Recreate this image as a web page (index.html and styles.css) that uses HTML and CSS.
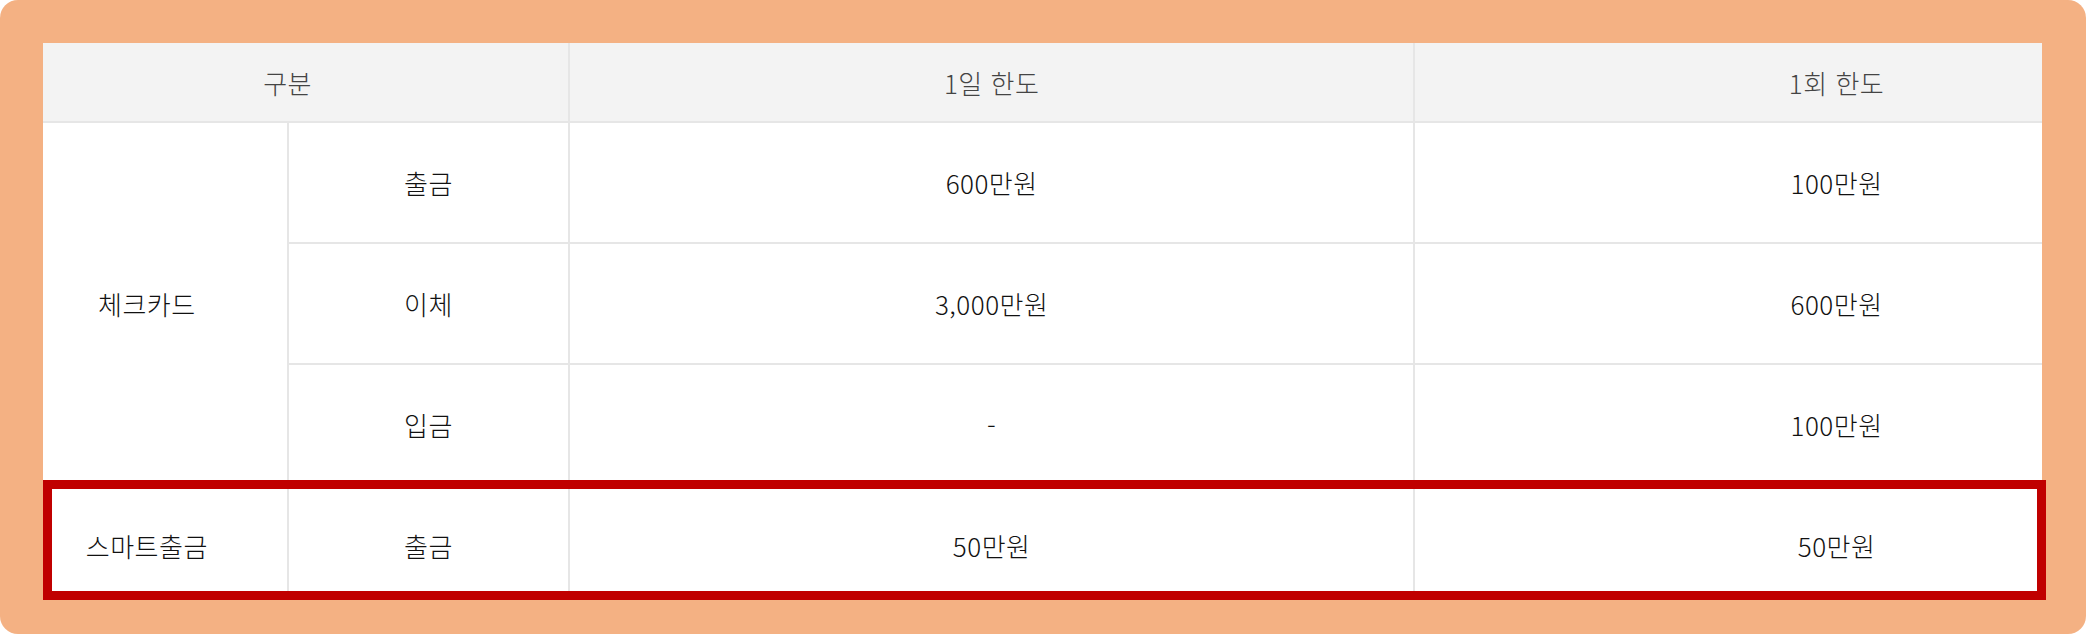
FILE: index.html
```html
<!DOCTYPE html>
<html lang="ko">
<head>
    <meta charset="UTF-8">
    <meta name="viewport" content="width=device-width, initial-scale=1.0">
    <title>한도 안내</title>
    <link rel="stylesheet" href="styles.css">
</head>
<body>
    <!-- 주황색 프레임 -->
    <div class="frame">
        <div class="viewport">
            <table class="limits">
                <colgroup>
                    <col class="c-type">
                    <col class="c-sub">
                    <col class="c-day">
                    <col class="c-once">
                </colgroup>
                <thead>
                    <tr>
                        <th colspan="2">구분</th>
                        <th>1일 한도</th>
                        <th>1회 한도</th>
                    </tr>
                </thead>
                <tbody>
                    <tr>
                        <td rowspan="3">체크카드</td>
                        <td>출금</td>
                        <td>600만원</td>
                        <td>100만원</td>
                    </tr>
                    <tr>
                        <td>이체</td>
                        <td>3,000만원</td>
                        <td>600만원</td>
                    </tr>
                    <tr>
                        <td>입금</td>
                        <td>-</td>
                        <td>100만원</td>
                    </tr>
                    <tr>
                        <td>스마트출금</td>
                        <td>출금</td>
                        <td>50만원</td>
                        <td>50만원</td>
                    </tr>
                </tbody>
            </table>
        </div>

        <!-- 강조 표시 -->
        <div class="highlight"></div>
    </div>
</body>
</html>
```

FILE: styles.css
```css
/* 기본 */
* {
    margin: 0;
    padding: 0;
    box-sizing: border-box;
}

body {
    font-family: "Noto Sans CJK KR", "Noto Sans", sans-serif;
    background: #fff;
}

/* 프레임 */
.frame {
    position: relative;
    width: 2086px;
    height: 634px;
    padding: 43px 44px 34px 43px;
    background: #f4b183;
    border-radius: 18px;
}

.viewport {
    height: 557px;
    overflow: hidden;
    background: #fff;
}

/* 표 */
.limits {
    width: 2255px;
    margin-left: -38px;
    border-collapse: collapse;
    table-layout: fixed;
    font-size: 26px;
    letter-spacing: 0.5px;
    font-weight: 300;
    color: #111;
}

.c-type,
.c-sub {
    width: 12.5%;
}

.c-day,
.c-once {
    width: 37.5%;
}

.limits th,
.limits td {
    border: 2px solid #e6e6e6;
    text-align: center;
    font-weight: 300;
}

.limits th {
    height: 79px;
    background: #f3f3f3;
    color: #444;
}

.limits td {
    height: 121px;
    color: #111;
}

.limits thead th {
    border-top: none;
}

/* 빨간 강조 박스 */
.highlight {
    position: absolute;
    left: 43px;
    top: 480px;
    width: 2003px;
    height: 120px;
    border: 9px solid #c00000;
}
```
